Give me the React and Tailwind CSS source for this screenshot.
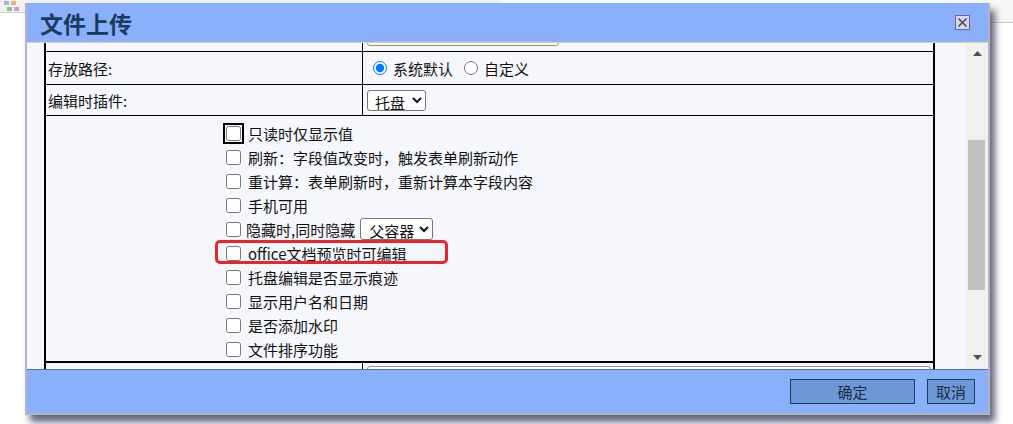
import React from "react";

const options = [
  "只读时仅显示值",
  "刷新：字段值改变时，触发表单刷新动作",
  "重计算：表单刷新时，重新计算本字段内容",
  "手机可用",
  "隐藏时,同时隐藏",
  "office文档预览时可编辑",
  "托盘编辑是否显示痕迹",
  "显示用户名和日期",
  "是否添加水印",
  "文件排序功能",
];

const Arrow = ({ down }) => (
  <svg width="9" height="5" viewBox="0 0 9 5">
    <path d={down ? "M0 0 L9 0 L4.5 5 Z" : "M0 5 L9 5 L4.5 0 Z"} fill="#505050" />
  </svg>
);

const OptionRow = ({ label, idx }) => {
  if (idx === 4) {
    return (
      <div className="flex items-center h-[24px]">
        <input type="checkbox" className="m-0 w-[15px] h-[15px]" />
        <span className="ml-[5px]">{label}</span>
        <select className="ml-[5px] w-[73px] h-[22px] border border-[#767676] rounded-[3px] bg-white text-[15px] pl-[4px]">
          <option>父容器</option>
        </select>
      </div>
    );
  }
  return (
    <div className="relative flex items-center h-[24px]">
      <input
        type="checkbox"
        className={
          idx === 0
            ? "m-0 w-[15px] h-[15px] rounded-[3px] outline-2 outline-black outline-offset-[1px]"
            : "m-0 w-[15px] h-[15px]"
        }
      />
      <span className="ml-[7px]">{label}</span>
      {idx === 5 && (
        <div className="pointer-events-none absolute -left-[11px] -top-[1px] w-[233px] h-[24px] border-[3px] border-[#e8262a] rounded-[5px]" />
      )}
    </div>
  );
};

export default function App() {
  return (
    <div className="relative w-[1013px] h-[424px] overflow-hidden bg-white font-['Noto_Sans_CJK_SC',sans-serif] text-[15px] text-[#111] leading-none">
      {/* page behind the dialog */}
      <div className="flex items-start">
        <div className="w-[500px] h-[13px] bg-[#f1f1f1] border-b border-[#cfcfcf] flex items-start pl-[2px]">
          <svg width="20" height="12" viewBox="0 0 20 12">
            <rect x="2" y="1" width="5" height="4" fill="#9bb8e0" />
            <rect x="9" y="1" width="5" height="4" fill="#e6b080" />
            <rect x="5" y="7" width="5" height="4" fill="#8fc08f" />
            <rect x="12" y="7" width="5" height="4" fill="#c9a0d8" />
          </svg>
        </div>
        <div className="flex-1 h-[23px] bg-[#f7f7f7] border-b border-[#c8c8c8]" />
      </div>

      {/* dialog */}
      <div className="absolute left-[25px] top-[3px] w-[965px] flex flex-col border-x-2 border-b-2 border-[#b5b5c2] shadow-[5px_7px_7px_rgba(60,60,95,0.8)]">
        <div className="h-[40px] bg-[#8ab0fb] border-b border-[#ddd6a6] flex items-center justify-between pl-[13px] pr-[18px]">
          <h1 className="text-[23px] font-bold text-[#1b3b5e] leading-none pt-[2px]">文件上传</h1>
          <button className="w-[15px] h-[15px] bg-[#d6d6ea] border border-[#6b6b80] flex items-center justify-center">
            <svg width="11" height="11" viewBox="0 0 11 11">
              <path d="M1.5 1.5 L9.5 9.5 M9.5 1.5 L1.5 9.5" stroke="#4a4a66" strokeWidth="1.6" />
            </svg>
          </button>
        </div>

        <div className="h-[326px] flex bg-[#f5f7fc]">
          <div className="w-[939px] overflow-hidden pl-[17px]">
            <div className="w-[891px] -mt-[21px] border-x-2 border-black">
              <div className="flex h-[30px] border-b border-black">
                <div className="w-[317px] border-r border-black" />
                <div className="flex items-end pb-[5px] pl-[4px]">
                  <div className="w-[192px] h-[22px] border border-[#8f8f8f] rounded-[3px] bg-white" />
                </div>
              </div>
              <div className="flex h-[33px] border-b border-black">
                <div className="w-[317px] border-r border-black flex items-center pl-[2px]">存放路径:</div>
                <div className="flex items-center pl-[10px]">
                  <input type="radio" name="path" defaultChecked className="m-0 w-[14px] h-[14px]" />
                  <span className="ml-[6px]">系统默认</span>
                  <input type="radio" name="path" className="m-0 ml-[11px] w-[14px] h-[14px]" />
                  <span className="ml-[6px]">自定义</span>
                </div>
              </div>
              <div className="flex h-[31px] border-b border-black">
                <div className="w-[317px] border-r border-black flex items-center pl-[2px]">编辑时插件:</div>
                <div className="flex items-center pl-[4px]">
                  <select className="w-[59px] h-[21px] border border-[#767676] rounded-[3px] bg-white text-[15px] pl-[3px]">
                    <option>托盘</option>
                  </select>
                </div>
              </div>
              <div className="h-[247px] border-b-2 border-black pt-[5px] pl-[180px] flex flex-col">
                {options.map((o, i) => (
                  <OptionRow key={o} label={o} idx={i} />
                ))}
              </div>
              <div className="flex h-[30px]">
                <div className="w-[317px] border-r border-black" />
                <div className="pl-[4px] pt-[3px]">
                  <div className="w-[564px] h-[22px] border border-[#8f8f8f] rounded-[3px] bg-white" />
                </div>
              </div>
            </div>
          </div>

          <div className="flex-1 bg-[#f0f0f0] flex flex-col">
            <div className="h-[20px] flex items-center justify-center">
              <Arrow />
            </div>
            <div className="mt-[77px] ml-[2px] w-[17px] h-[150px] bg-[#c1c1c1]" />
            <div className="mt-auto h-[24px] flex items-center justify-center">
              <Arrow down />
            </div>
          </div>
        </div>

        <div className="h-[44px] bg-[#8ab0fb] border-t border-[#4f70a8] flex items-center justify-end gap-[12px] pr-[13px]">
          <button className="w-[125px] h-[25px] bg-[#6f98d6] border border-[#1f3a66] text-[#1c2c48] text-[15px]">确定</button>
          <button className="w-[48px] h-[25px] bg-[#6f98d6] border border-[#1f3a66] text-[#1c2c48] text-[15px]">取消</button>
        </div>
      </div>
    </div>
  );
}
